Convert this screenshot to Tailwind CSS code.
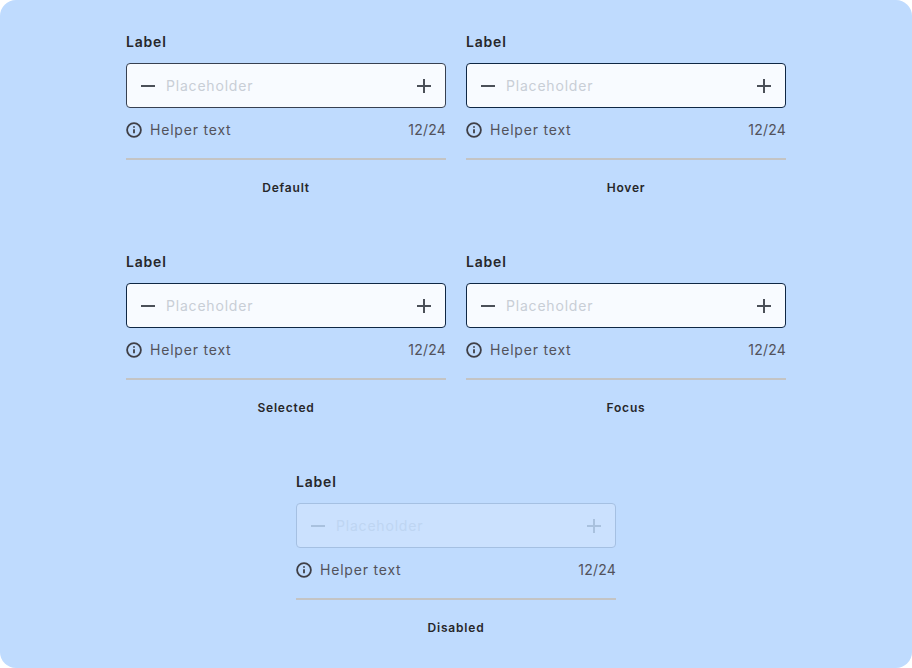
<!DOCTYPE html>
<html lang="en">
<head>
  <meta charset="UTF-8" />
  <script src="https://cdn.jsdelivr.net/npm/@tailwindcss/browser@4"></script>
  <title>Input states</title>
</head>
<body class="bg-white font-['Inter','Liberation_Sans',sans-serif]">
  <div class="w-[912px] h-[668px] bg-[#bfdbfe] rounded-[16px] pt-[32px] flex flex-col items-center">

    <!-- Default / Hover -->
    <div class="flex gap-5">
      <div class="w-[320px]">
        <div class="text-[14px] leading-[20px] font-semibold tracking-[0.8px] text-[#27272a] mb-[11px]">Label</div>
        <div class="h-[45px] bg-[#f8fbff] border border-[#374151] rounded-[4px] flex items-center pl-[13px] pr-[13px]">
          <svg class="w-4 h-4 text-[#4b5058]" viewBox="0 0 16 16" fill="none" stroke="currentColor" stroke-width="2"><path d="M1 8h14"/></svg>
          <span class="ml-[10px] flex-1 text-[14px] tracking-[0.8px] text-[#c8ced6]">Placeholder</span>
          <svg class="w-4 h-4 text-[#4b5058]" viewBox="0 0 16 16" fill="none" stroke="currentColor" stroke-width="2"><path d="M1 8h14M8 1v14"/></svg>
        </div>
        <div class="flex items-center justify-between mt-[12px] h-[20px]">
          <div class="flex items-center gap-2">
            <svg class="w-4 h-4 text-[#3f3f46]" viewBox="0 0 16 16" fill="none" stroke="currentColor" stroke-width="1.8"><circle cx="8" cy="8" r="6.9"/><path d="M8 7.2v4M8 4.2v1.6"/></svg>
            <span class="text-[14px] tracking-[0.8px] text-[#52525b] mb-[2px]">Helper text</span>
          </div>
          <span class="text-[14px] tracking-[0.2px] text-[#52525b] mb-[2px]">12/24</span>
        </div>
        <div class="h-[2px] bg-[#c4c4c4] mt-[18px]"></div>
        <div class="text-center text-[12px] leading-[16px] font-semibold tracking-[0.8px] text-[#27272a] mt-[20px]">Default</div>
      </div>
      <div class="w-[320px]">
        <div class="text-[14px] leading-[20px] font-semibold tracking-[0.8px] text-[#27272a] mb-[11px]">Label</div>
        <div class="h-[45px] bg-[#f8fbff] border border-[#0f2744] rounded-[4px] flex items-center pl-[13px] pr-[13px]">
          <svg class="w-4 h-4 text-[#4b5058]" viewBox="0 0 16 16" fill="none" stroke="currentColor" stroke-width="2"><path d="M1 8h14"/></svg>
          <span class="ml-[10px] flex-1 text-[14px] tracking-[0.8px] text-[#c8ced6]">Placeholder</span>
          <svg class="w-4 h-4 text-[#4b5058]" viewBox="0 0 16 16" fill="none" stroke="currentColor" stroke-width="2"><path d="M1 8h14M8 1v14"/></svg>
        </div>
        <div class="flex items-center justify-between mt-[12px] h-[20px]">
          <div class="flex items-center gap-2">
            <svg class="w-4 h-4 text-[#3f3f46]" viewBox="0 0 16 16" fill="none" stroke="currentColor" stroke-width="1.8"><circle cx="8" cy="8" r="6.9"/><path d="M8 7.2v4M8 4.2v1.6"/></svg>
            <span class="text-[14px] tracking-[0.8px] text-[#52525b] mb-[2px]">Helper text</span>
          </div>
          <span class="text-[14px] tracking-[0.2px] text-[#52525b] mb-[2px]">12/24</span>
        </div>
        <div class="h-[2px] bg-[#c4c4c4] mt-[18px]"></div>
        <div class="text-center text-[12px] leading-[16px] font-semibold tracking-[0.8px] text-[#27272a] mt-[20px]">Hover</div>
      </div>
    </div>

    <!-- Selected / Focus -->
    <div class="flex gap-5 mt-[56px]">
      <div class="w-[320px]">
        <div class="text-[14px] leading-[20px] font-semibold tracking-[0.8px] text-[#27272a] mb-[11px]">Label</div>
        <div class="h-[45px] bg-[#f8fbff] border border-[#0f2744] rounded-[4px] flex items-center pl-[13px] pr-[13px]">
          <svg class="w-4 h-4 text-[#4b5058]" viewBox="0 0 16 16" fill="none" stroke="currentColor" stroke-width="2"><path d="M1 8h14"/></svg>
          <span class="ml-[10px] flex-1 text-[14px] tracking-[0.8px] text-[#c8ced6]">Placeholder</span>
          <svg class="w-4 h-4 text-[#4b5058]" viewBox="0 0 16 16" fill="none" stroke="currentColor" stroke-width="2"><path d="M1 8h14M8 1v14"/></svg>
        </div>
        <div class="flex items-center justify-between mt-[12px] h-[20px]">
          <div class="flex items-center gap-2">
            <svg class="w-4 h-4 text-[#3f3f46]" viewBox="0 0 16 16" fill="none" stroke="currentColor" stroke-width="1.8"><circle cx="8" cy="8" r="6.9"/><path d="M8 7.2v4M8 4.2v1.6"/></svg>
            <span class="text-[14px] tracking-[0.8px] text-[#52525b] mb-[2px]">Helper text</span>
          </div>
          <span class="text-[14px] tracking-[0.2px] text-[#52525b] mb-[2px]">12/24</span>
        </div>
        <div class="h-[2px] bg-[#c4c4c4] mt-[18px]"></div>
        <div class="text-center text-[12px] leading-[16px] font-semibold tracking-[0.8px] text-[#27272a] mt-[20px]">Selected</div>
      </div>
      <div class="w-[320px]">
        <div class="text-[14px] leading-[20px] font-semibold tracking-[0.8px] text-[#27272a] mb-[11px]">Label</div>
        <div class="h-[45px] bg-[#f8fbff] border border-[#0f2744] rounded-[4px] flex items-center pl-[13px] pr-[13px]">
          <svg class="w-4 h-4 text-[#4b5058]" viewBox="0 0 16 16" fill="none" stroke="currentColor" stroke-width="2"><path d="M1 8h14"/></svg>
          <span class="ml-[10px] flex-1 text-[14px] tracking-[0.8px] text-[#c8ced6]">Placeholder</span>
          <svg class="w-4 h-4 text-[#4b5058]" viewBox="0 0 16 16" fill="none" stroke="currentColor" stroke-width="2"><path d="M1 8h14M8 1v14"/></svg>
        </div>
        <div class="flex items-center justify-between mt-[12px] h-[20px]">
          <div class="flex items-center gap-2">
            <svg class="w-4 h-4 text-[#3f3f46]" viewBox="0 0 16 16" fill="none" stroke="currentColor" stroke-width="1.8"><circle cx="8" cy="8" r="6.9"/><path d="M8 7.2v4M8 4.2v1.6"/></svg>
            <span class="text-[14px] tracking-[0.8px] text-[#52525b] mb-[2px]">Helper text</span>
          </div>
          <span class="text-[14px] tracking-[0.2px] text-[#52525b] mb-[2px]">12/24</span>
        </div>
        <div class="h-[2px] bg-[#c4c4c4] mt-[18px]"></div>
        <div class="text-center text-[12px] leading-[16px] font-semibold tracking-[0.8px] text-[#27272a] mt-[20px]">Focus</div>
      </div>
    </div>

    <!-- Disabled -->
    <div class="w-[320px] mt-[56px]">
      <div class="text-[14px] leading-[20px] font-semibold tracking-[0.8px] text-[#27272a] mb-[11px]">Label</div>
      <div class="h-[45px] bg-[#cbe1fe] border border-[#a5c0e2] rounded-[4px] flex items-center pl-[13px] pr-[13px]">
        <svg class="w-4 h-4 text-[#a9c1de]" viewBox="0 0 16 16" fill="none" stroke="currentColor" stroke-width="2"><path d="M1 8h14"/></svg>
        <span class="ml-[10px] flex-1 text-[14px] tracking-[0.8px] text-[#bed5f2]">Placeholder</span>
        <svg class="w-4 h-4 text-[#a9c1de]" viewBox="0 0 16 16" fill="none" stroke="currentColor" stroke-width="2"><path d="M1 8h14M8 1v14"/></svg>
      </div>
      <div class="flex items-center justify-between mt-[12px] h-[20px]">
        <div class="flex items-center gap-2">
          <svg class="w-4 h-4 text-[#3f3f46]" viewBox="0 0 16 16" fill="none" stroke="currentColor" stroke-width="1.8"><circle cx="8" cy="8" r="6.9"/><path d="M8 7.2v4M8 4.2v1.6"/></svg>
          <span class="text-[14px] tracking-[0.8px] text-[#52525b] mb-[2px]">Helper text</span>
        </div>
        <span class="text-[14px] tracking-[0.2px] text-[#52525b] mb-[2px]">12/24</span>
      </div>
      <div class="h-[2px] bg-[#c4c4c4] mt-[18px]"></div>
      <div class="text-center text-[12px] leading-[16px] font-semibold tracking-[0.8px] text-[#27272a] mt-[20px]">Disabled</div>
    </div>

  </div>
</body>
</html>
